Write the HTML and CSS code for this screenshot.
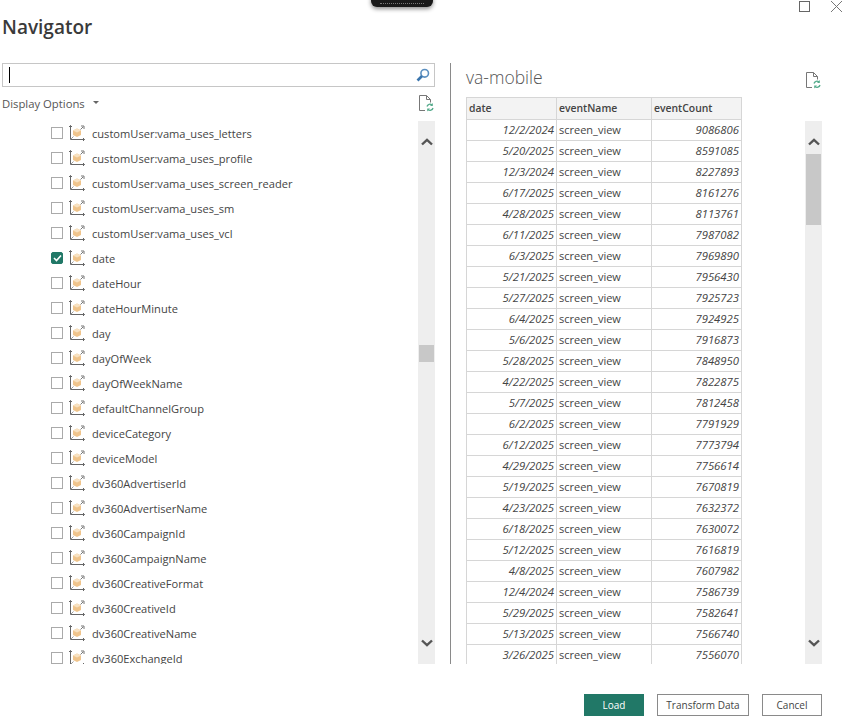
FILE: index.html
```html
<!DOCTYPE html>
<html lang="en">
<head>
    <meta charset="UTF-8">
    <meta name="viewport" content="width=device-width, initial-scale=1.0">
    <title>Navigator</title>
    <link rel="stylesheet" href="styles.css">
</head>
<body>
    <svg class="defs" width="0" height="0">
        <symbol id="dim" viewBox="0 0 16 16">
            <path d="M1.5 0.5V14.5H15.5M0 2L1.5 0.5L3 2M14 13L15.5 14.5L14 16" fill="none" stroke="#666" stroke-width="1"/>
            <path d="M1.5 14.5L4.5 11.5" fill="none" stroke="#999" stroke-width="1"/>
            <path d="M11.5 4.5L14 2M12 1H15V4" fill="none" stroke="#777" stroke-width="1"/>
            <path d="M8 3.5L12 5.5V10L8 12L4 10V5.5Z" fill="#efc48c"/>
            <path d="M4 5.5L8 7.5L12 5.5L8 3.5Z" fill="#f8e2c2"/>
        </symbol>
        <symbol id="refresh" viewBox="0 0 16 17">
            <path d="M7 15.5H1.5V0.5H8.5L12.5 4.5V7.5M8.5 0.5V4.5H12.5" fill="none" stroke="#777" stroke-width="1"/>
            <path d="M9 11.5A3 3 0 0 1 14 10M15 13A3 3 0 0 1 10 14.5" fill="none" stroke="#55ab8c" stroke-width="1.3"/>
            <path d="M14.8 8V11H12ZM9.2 16.5V13.5H12Z" fill="#55ab8c"/>
        </symbol>
        <symbol id="up" viewBox="0 0 12 8">
            <path d="M1 6.5L6 1.8L11 6.5" fill="none" stroke="#555" stroke-width="2.4"/>
        </symbol>
        <symbol id="down" viewBox="0 0 12 8">
            <path d="M1 1.5L6 6.2L11 1.5" fill="none" stroke="#555" stroke-width="2.4"/>
        </symbol>
    </svg>

    <div class="pill"><span class="pill-dots"></span></div>
    <div class="window-btns">
        <span class="win-max"></span>
        <svg class="win-close" width="11" height="11" viewBox="0 0 11 11">
            <path d="M0 0L11 11M11 0L0 11" stroke="#777" stroke-width="1" fill="none"/>
        </svg>
    </div>

    <h1 class="title">Navigator</h1>

    <div class="panes">
        <div class="left">
            <div class="search">
                <span class="caret"></span>
                <svg class="search-icon" width="14" height="14" viewBox="0 0 14 14">
                    <circle cx="8.7" cy="5.3" r="3.8" fill="none" stroke="#5b8fc0" stroke-width="1.6"/>
                    <path d="M6 8L1.5 12.5" stroke="#3a75ad" stroke-width="2.6" fill="none"/>
                </svg>
            </div>
            <div class="options">
                <span>Display Options</span>
                <span class="arrow"></span>
                <svg class="refresh" width="16" height="17"><use href="#refresh"/></svg>
            </div>
            <div class="list-wrap">
                <ul class="list">
                    <li><span class="check"></span><svg class="dim"><use href="#dim"/></svg>customUser:vama_uses_letters</li>
                    <li><span class="check"></span><svg class="dim"><use href="#dim"/></svg>customUser:vama_uses_profile</li>
                    <li><span class="check"></span><svg class="dim"><use href="#dim"/></svg>customUser:vama_uses_screen_reader</li>
                    <li><span class="check"></span><svg class="dim"><use href="#dim"/></svg>customUser:vama_uses_sm</li>
                    <li><span class="check"></span><svg class="dim"><use href="#dim"/></svg>customUser:vama_uses_vcl</li>
                    <li><span class="check checked"><svg width="9" height="8" viewBox="0 0 9 8"><path d="M1 4L3.5 6.5L8 1.5" fill="none" stroke="#fff" stroke-width="1.6"/></svg></span><svg class="dim"><use href="#dim"/></svg>date</li>
                    <li><span class="check"></span><svg class="dim"><use href="#dim"/></svg>dateHour</li>
                    <li><span class="check"></span><svg class="dim"><use href="#dim"/></svg>dateHourMinute</li>
                    <li><span class="check"></span><svg class="dim"><use href="#dim"/></svg>day</li>
                    <li><span class="check"></span><svg class="dim"><use href="#dim"/></svg>dayOfWeek</li>
                    <li><span class="check"></span><svg class="dim"><use href="#dim"/></svg>dayOfWeekName</li>
                    <li><span class="check"></span><svg class="dim"><use href="#dim"/></svg>defaultChannelGroup</li>
                    <li><span class="check"></span><svg class="dim"><use href="#dim"/></svg>deviceCategory</li>
                    <li><span class="check"></span><svg class="dim"><use href="#dim"/></svg>deviceModel</li>
                    <li><span class="check"></span><svg class="dim"><use href="#dim"/></svg>dv360AdvertiserId</li>
                    <li><span class="check"></span><svg class="dim"><use href="#dim"/></svg>dv360AdvertiserName</li>
                    <li><span class="check"></span><svg class="dim"><use href="#dim"/></svg>dv360CampaignId</li>
                    <li><span class="check"></span><svg class="dim"><use href="#dim"/></svg>dv360CampaignName</li>
                    <li><span class="check"></span><svg class="dim"><use href="#dim"/></svg>dv360CreativeFormat</li>
                    <li><span class="check"></span><svg class="dim"><use href="#dim"/></svg>dv360CreativeId</li>
                    <li><span class="check"></span><svg class="dim"><use href="#dim"/></svg>dv360CreativeName</li>
                    <li><span class="check"></span><svg class="dim"><use href="#dim"/></svg>dv360ExchangeId</li>
                </ul>
                <div class="scrollbar">
                    <svg class="sb-up" width="12" height="8"><use href="#up"/></svg>
                    <div class="thumb thumb-left"></div>
                    <svg class="sb-down" width="12" height="8"><use href="#down"/></svg>
                </div>
            </div>
        </div>

        <div class="divider"></div>

        <div class="right">
            <div class="preview-head">
                <h2 class="preview-title">va-mobile</h2>
                <svg class="refresh" width="16" height="17"><use href="#refresh"/></svg>
            </div>
            <div class="preview-body">
                <table class="preview">
                    <colgroup><col class="col-date"><col class="col-name"><col class="col-count"></colgroup>
                    <thead>
                        <tr><th>date</th><th>eventName</th><th>eventCount</th></tr>
                    </thead>
                    <tbody>
                        <tr><td class="num">12/2/2024</td><td>screen_view</td><td class="num">9086806</td></tr>
                        <tr><td class="num">5/20/2025</td><td>screen_view</td><td class="num">8591085</td></tr>
                        <tr><td class="num">12/3/2024</td><td>screen_view</td><td class="num">8227893</td></tr>
                        <tr><td class="num">6/17/2025</td><td>screen_view</td><td class="num">8161276</td></tr>
                        <tr><td class="num">4/28/2025</td><td>screen_view</td><td class="num">8113761</td></tr>
                        <tr><td class="num">6/11/2025</td><td>screen_view</td><td class="num">7987082</td></tr>
                        <tr><td class="num">6/3/2025</td><td>screen_view</td><td class="num">7969890</td></tr>
                        <tr><td class="num">5/21/2025</td><td>screen_view</td><td class="num">7956430</td></tr>
                        <tr><td class="num">5/27/2025</td><td>screen_view</td><td class="num">7925723</td></tr>
                        <tr><td class="num">6/4/2025</td><td>screen_view</td><td class="num">7924925</td></tr>
                        <tr><td class="num">5/6/2025</td><td>screen_view</td><td class="num">7916873</td></tr>
                        <tr><td class="num">5/28/2025</td><td>screen_view</td><td class="num">7848950</td></tr>
                        <tr><td class="num">4/22/2025</td><td>screen_view</td><td class="num">7822875</td></tr>
                        <tr><td class="num">5/7/2025</td><td>screen_view</td><td class="num">7812458</td></tr>
                        <tr><td class="num">6/2/2025</td><td>screen_view</td><td class="num">7791929</td></tr>
                        <tr><td class="num">6/12/2025</td><td>screen_view</td><td class="num">7773794</td></tr>
                        <tr><td class="num">4/29/2025</td><td>screen_view</td><td class="num">7756614</td></tr>
                        <tr><td class="num">5/19/2025</td><td>screen_view</td><td class="num">7670819</td></tr>
                        <tr><td class="num">4/23/2025</td><td>screen_view</td><td class="num">7632372</td></tr>
                        <tr><td class="num">6/18/2025</td><td>screen_view</td><td class="num">7630072</td></tr>
                        <tr><td class="num">5/12/2025</td><td>screen_view</td><td class="num">7616819</td></tr>
                        <tr><td class="num">4/8/2025</td><td>screen_view</td><td class="num">7607982</td></tr>
                        <tr><td class="num">12/4/2024</td><td>screen_view</td><td class="num">7586739</td></tr>
                        <tr><td class="num">5/29/2025</td><td>screen_view</td><td class="num">7582641</td></tr>
                        <tr><td class="num">5/13/2025</td><td>screen_view</td><td class="num">7566740</td></tr>
                        <tr><td class="num">3/26/2025</td><td>screen_view</td><td class="num">7556070</td></tr>
                    </tbody>
                </table>
                <div class="scrollbar scrollbar-right">
                    <svg class="sb-up" width="12" height="8"><use href="#up"/></svg>
                    <div class="thumb thumb-right"></div>
                    <svg class="sb-down" width="12" height="8"><use href="#down"/></svg>
                </div>
            </div>
        </div>
    </div>

    <div class="footer">
        <button class="btn btn-load">Load</button>
        <button class="btn btn-transform">Transform Data</button>
        <button class="btn btn-cancel">Cancel</button>
    </div>
</body>
</html>
```

FILE: styles.css
```css
* {
    box-sizing: border-box;
}

html, body {
    margin: 0;
    padding: 0;
}

body {
    position: relative;
    width: 847px;
    height: 720px;
    overflow: hidden;
    background-color: #fff;
    color: #444;
    font-family: "Open Sans", "Noto Sans", sans-serif;
    font-size: 11px;
}

.defs {
    position: absolute;
}

/* stuff lying over the dialog */
.pill {
    position: absolute;
    left: 371px;
    top: -8px;
    width: 62px;
    height: 15px;
    border-radius: 6px;
    background-color: #1a1a1a;
    box-shadow: 0 2px 4px rgba(0, 0, 0, 0.45);
}

.pill-dots {
    position: absolute;
    left: 9px;
    right: 9px;
    bottom: 3px;
    border-bottom: 1px dotted #777;
}

.window-btns {
    position: absolute;
    top: 1px;
    left: 799px;
    display: flex;
    gap: 21px;
}

.win-max {
    display: block;
    width: 11px;
    height: 11px;
    border: 1px solid #666;
}

.win-close {
    display: block;
}

.title {
    height: 63px;
    margin: 0;
    padding: 14px 0 0 2px;
    color: #3a3a3a;
    font-size: 19px;
    font-weight: 600;
    line-height: 27px;
}

.panes {
    display: flex;
    height: 601px;
    padding-left: 2px;
}

.left {
    display: flex;
    flex-direction: column;
    width: 433px;
}

.search {
    display: flex;
    align-items: center;
    justify-content: space-between;
    height: 24px;
    padding: 0 4px 0 6px;
    border: 1px solid #c6c6c6;
}

.caret {
    width: 1px;
    height: 16px;
    background-color: #000;
}

.options {
    display: flex;
    align-items: center;
    height: 34px;
    padding-bottom: 2px;
    color: #555;
    font-size: 11.3px;
}

.arrow {
    width: 0;
    height: 0;
    margin-left: 8px;
    margin-top: -2px;
    border-left: 3px solid transparent;
    border-right: 3px solid transparent;
    border-top: 3px solid #666;
}

.options .refresh {
    margin-left: auto;
    margin-right: 1px;
}

.list-wrap {
    display: flex;
    height: 543px;
    overflow: hidden;
}

.list {
    flex: 1;
    margin: 0;
    padding: 0 0 0 49px;
    list-style: none;
    font-size: 11.1px;
}

.list li {
    display: flex;
    align-items: center;
    height: 25px;
    padding-bottom: 1px;
    white-space: nowrap;
}

.check {
    display: flex;
    align-items: center;
    justify-content: center;
    width: 12px;
    height: 12px;
    margin-right: 6px;
    border: 1px solid #aaa;
}

.check.checked {
    border-color: #217867;
    border-radius: 2px;
    background-color: #217867;
}

.dim {
    width: 16px;
    height: 16px;
    margin-right: 7px;
}

.scrollbar {
    position: relative;
    flex: none;
    display: flex;
    flex-direction: column;
    align-items: center;
    width: 17px;
    height: 543px;
    background-color: #eeeeee;
}

.sb-up {
    margin-top: 17px;
}

.sb-down {
    margin-top: auto;
    margin-bottom: 17px;
}

.thumb {
    position: absolute;
    left: 1px;
    width: 15px;
    background-color: #c8c8c8;
}

.thumb-left {
    top: 224px;
    height: 17px;
}

.thumb-right {
    top: 33px;
    height: 71px;
}

.divider {
    width: 1px;
    margin-left: 15px;
    background-color: #8a8a8a;
}

.right {
    display: flex;
    flex-direction: column;
    width: 356px;
    margin-left: 15px;
}

.preview-head {
    display: flex;
    align-items: flex-start;
    justify-content: space-between;
    height: 34px;
    padding-right: 1px;
}

.preview-title {
    margin: 0;
    color: #555;
    font-size: 17.5px;
    font-weight: 300;
    line-height: 28px;
}

.preview-head .refresh {
    margin-top: 9px;
}

.preview-body {
    display: flex;
    justify-content: space-between;
    height: 567px;
    overflow: hidden;
}

.preview {
    width: 275px;
    height: 0;
    border-collapse: collapse;
    table-layout: fixed;
}

.col-date {
    width: 90px;
}

.col-name {
    width: 95px;
}

.col-count {
    width: 90px;
}

.preview th,
.preview td {
    height: 21px;
    padding: 0 2px 2px;
    border: 1px solid #d6d6d6;
    overflow: hidden;
    white-space: nowrap;
}

.preview th {
    height: 22px;
    background-color: #f3f3f3;
    font-size: 10.4px;
    font-weight: 600;
    text-align: left;
}

.preview td.num {
    font-size: 11.3px;
    font-style: italic;
    text-align: right;
}

.scrollbar-right {
    margin-top: 24px;
}

.footer {
    display: flex;
    justify-content: flex-end;
    gap: 13px;
    padding: 30px 25px 0 0;
}

.btn {
    height: 22px;
    padding: 0 0 1px;
    border: 1px solid #8a8a8a;
    background-color: #fff;
    color: #444;
    font-family: inherit;
    font-size: 10px;
}

.btn-load {
    width: 60px;
    border-color: #217867;
    background-color: #217867;
    color: #fff;
}

.btn-transform {
    width: 92px;
}

.btn-cancel {
    width: 60px;
}
```
